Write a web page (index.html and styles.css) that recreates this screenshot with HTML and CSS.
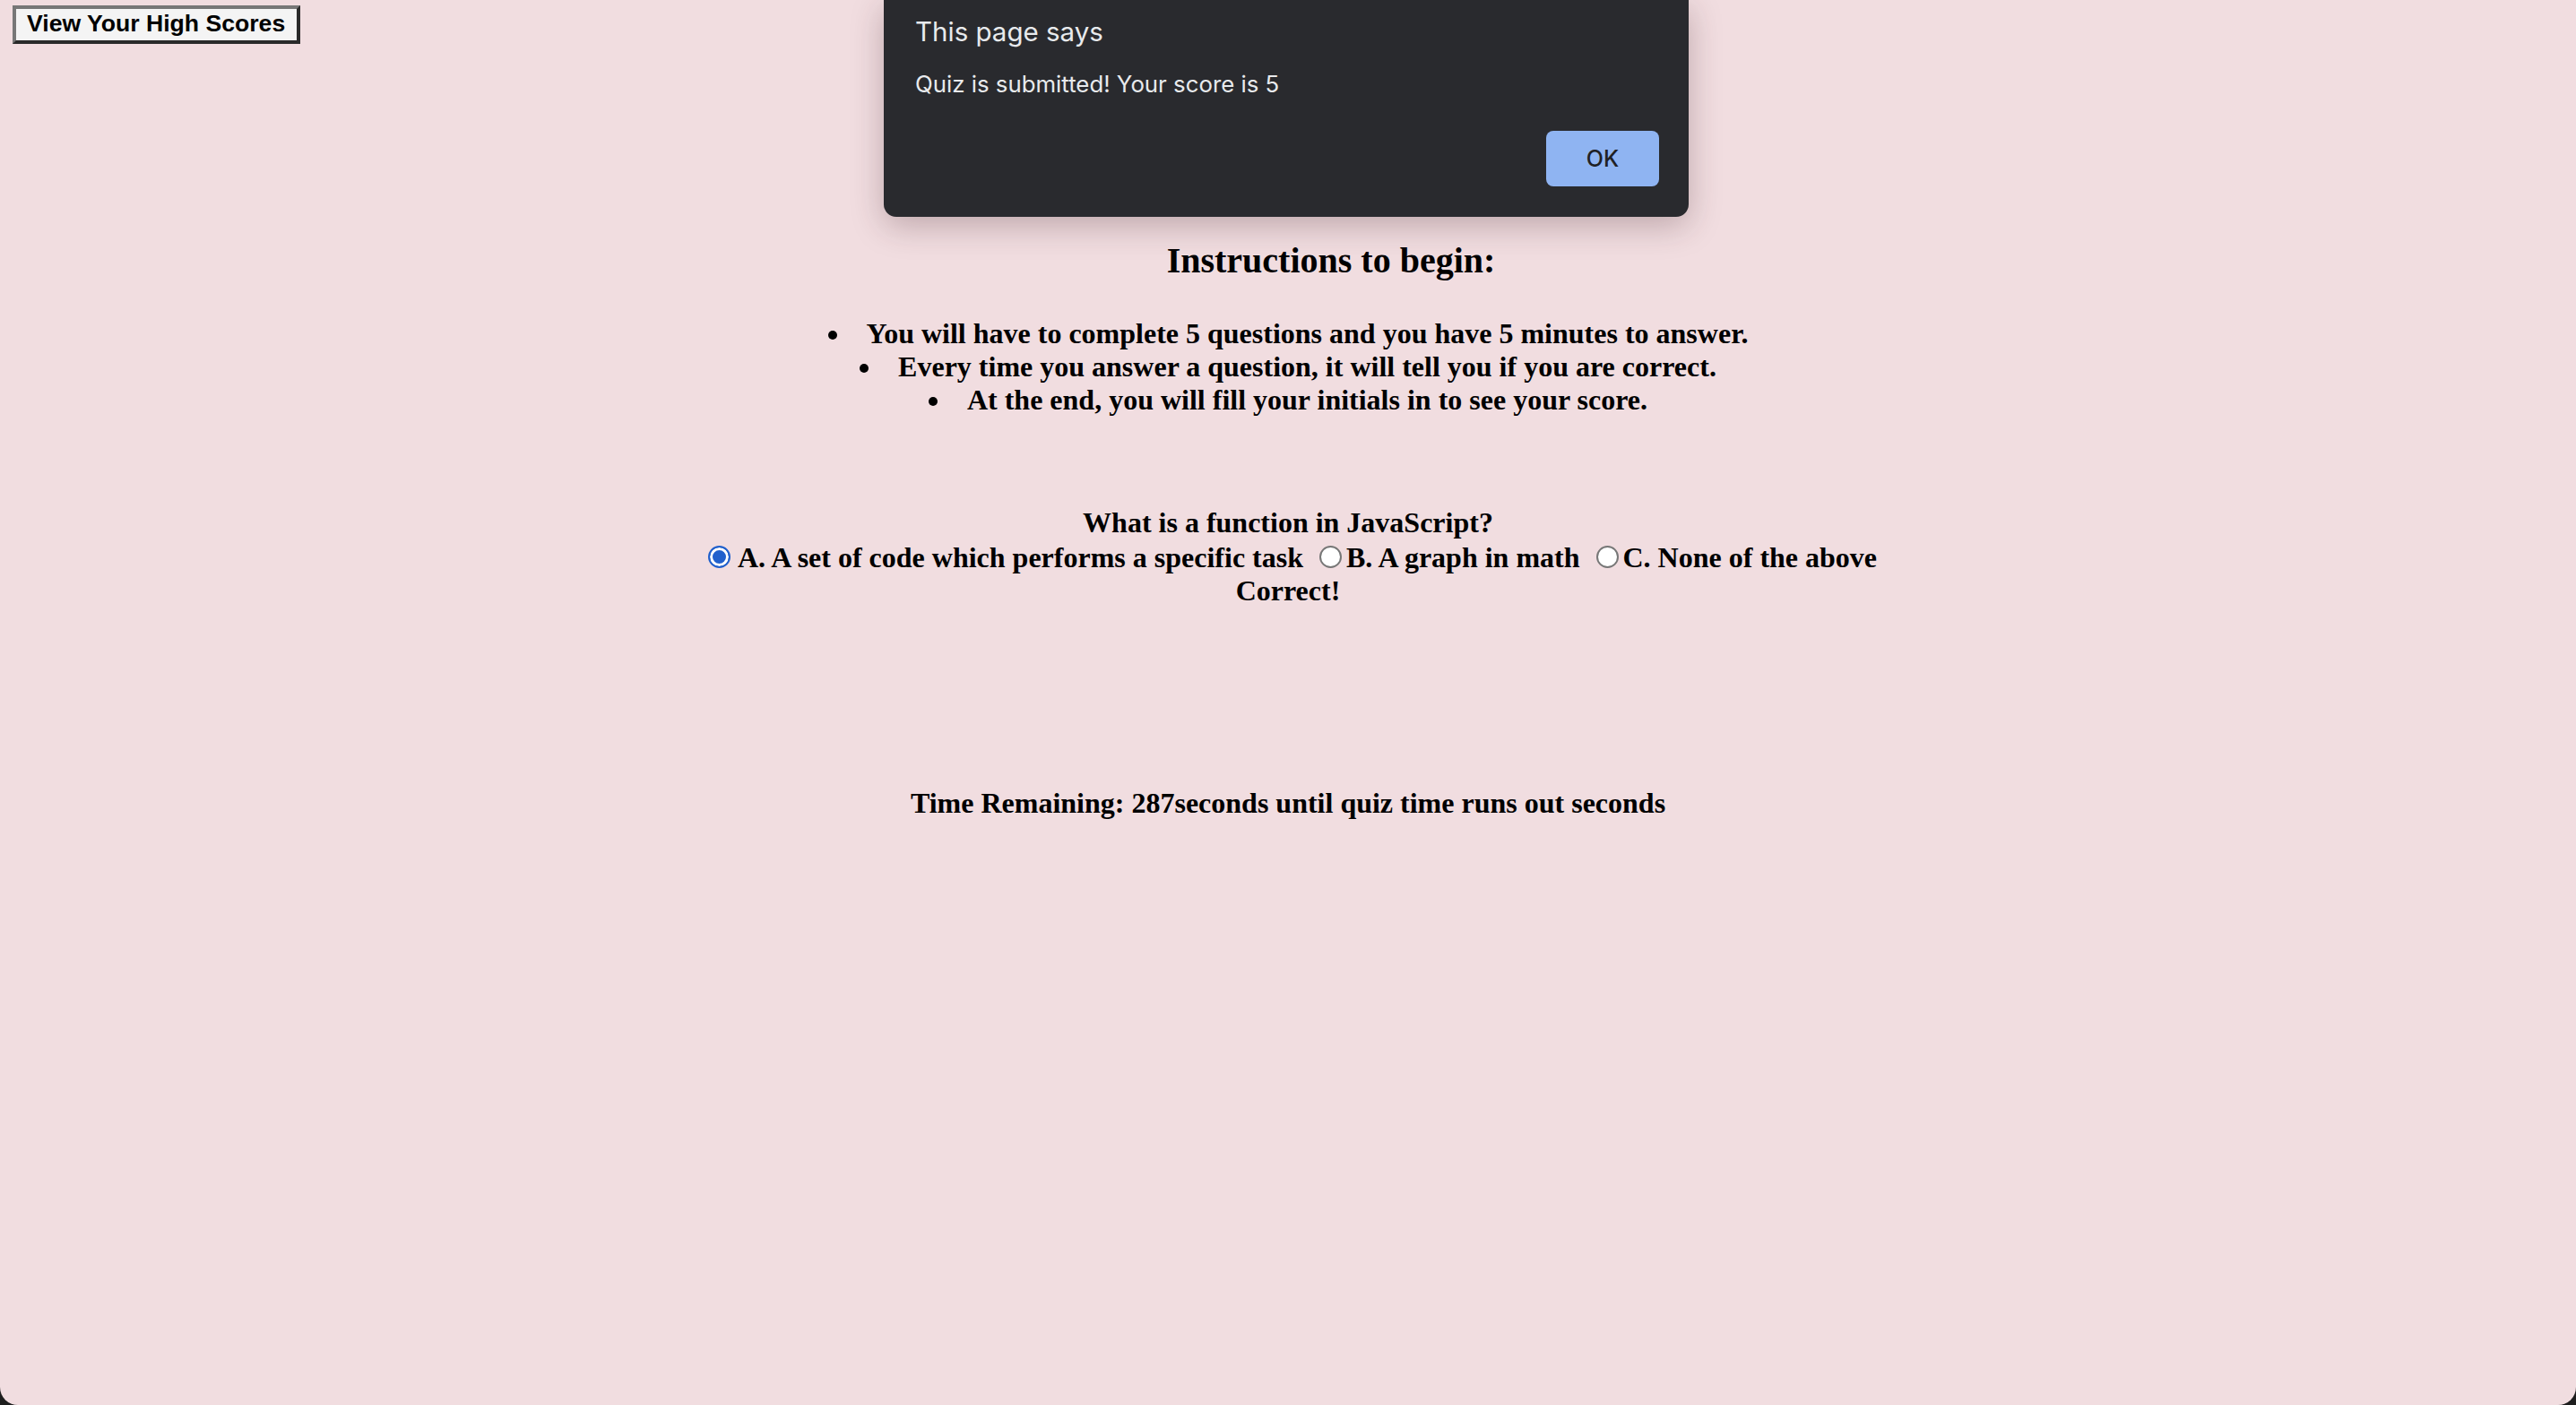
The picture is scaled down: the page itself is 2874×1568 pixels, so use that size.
FILE: index.html
```html
<!DOCTYPE html>
<html lang="en">
<head>
<meta charset="utf-8">
<title>Code Quiz</title>
<link rel="stylesheet" href="styles.css">
</head>
<body>
<div class="page">
  <header class="top">
    <button class="scores-btn" type="button">View Your High Scores</button>
  </header>

  <section class="instructions">
    <h2 class="title">Instructions to begin:</h2>
    <ul class="rules">
      <li>You will have to complete 5 questions and you have 5 minutes to answer.</li>
      <li>Every time you answer a question, it will tell you if you are correct.</li>
      <li>At the end, you will fill your initials in to see your score.</li>
    </ul>
  </section>

  <section class="quiz">
    <div class="question">What is a function in JavaScript?</div>
    <div class="options">
      <input class="radio radio-a" type="radio" name="q1" checked>A. A set of code which performs a specific task
      <input class="radio" type="radio" name="q1">B. A graph in math
      <input class="radio" type="radio" name="q1">C. None of the above
    </div>
    <div class="result">Correct!</div>
  </section>

  <div class="timer">Time Remaining: 287seconds until quiz time runs out seconds</div>
</div>

<div class="alert" role="alertdialog">
  <div class="alert-title">This page says</div>
  <div class="alert-msg">Quiz is submitted! Your score is 5</div>
  <div class="alert-actions">
    <button class="alert-ok" type="button">OK</button>
  </div>
</div>
</body>
</html>
```

FILE: styles.css
```css
html {
  background: #1e1e1e;
}
body {
  margin: 0;
  min-height: 1568px;
  background: #f1dde0;
  border-radius: 0 0 20px 20px;
  font-family: "Liberation Serif", "Times New Roman", serif;
  color: #000;
  overflow: hidden;
}
.page {
  padding: 6px 14px 0;
}
.top {
  display: flex;
}
.scores-btn {
  box-sizing: border-box;
  height: 43px;
  padding: 0 13px 3px 12px;
  border: 4px solid;
  border-color: #777 #2a2a2a #2a2a2a #777;
  background: #f4f4f4;
  font-family: "Liberation Sans", Arial, sans-serif;
  font-weight: bold;
  font-size: 26.6px;
  line-height: 30px;
  color: #000;
  border-radius: 0;
}

.instructions {
  margin-top: 219px;
  text-align: center;
}
.title {
  margin: 0;
  padding-left: 96px;
  font-size: 40px;
  line-height: 46px;
  font-weight: bold;
}
.rules {
  margin: 40px 0 0;
  padding: 0;
  list-style: disc inside;
  font-size: 32px;
  line-height: 37px;
  font-weight: bold;
}

.quiz {
  margin-top: 98px;
  text-align: center;
  font-size: 32px;
  font-weight: bold;
}
.question {
  line-height: 40px;
}
.options {
  line-height: 38px;
}
.result {
  line-height: 36px;
}
.radio {
  -webkit-appearance: none;
  appearance: none;
  box-sizing: border-box;
  width: 25px;
  height: 25px;
  margin: 0 5px -1px 10px;
  border: 2px solid #777;
  border-radius: 50%;
  background: #fff;
  vertical-align: baseline;
}
.radio-a {
  margin-right: 8px;
}
.radio:checked {
  border: 2.5px solid #2160cc;
  background: #2160cc;
  box-shadow: inset 0 0 0 3px #fff;
}

.timer {
  margin-top: 201px;
  text-align: center;
  font-size: 32px;
  line-height: 37px;
  font-weight: bold;
}

.alert {
  position: absolute;
  top: 0;
  left: 986px;
  width: 898px;
  height: 242px;
  box-sizing: border-box;
  padding: 17px 33px 0 35px;
  background: #292a2e;
  border-radius: 0 0 14px 14px;
  box-shadow: 0 10px 36px rgba(60, 30, 35, 0.28);
  font-family: Inter, "Noto Sans", sans-serif;
  color: #e8eaed;
}
.alert-title {
  font-size: 29.5px;
  line-height: 36px;
}
.alert-msg {
  margin-top: 26px;
  font-size: 25.8px;
  line-height: 30px;
}
.alert-actions {
  display: flex;
  justify-content: flex-end;
  margin-top: 37px;
}
.alert-ok {
  width: 126px;
  height: 62px;
  border: none;
  border-radius: 8px;
  background: #8fb4f2;
  color: #202124;
  font-family: Inter, "Noto Sans", sans-serif;
  font-size: 25px;
  font-weight: 500;
}
```
